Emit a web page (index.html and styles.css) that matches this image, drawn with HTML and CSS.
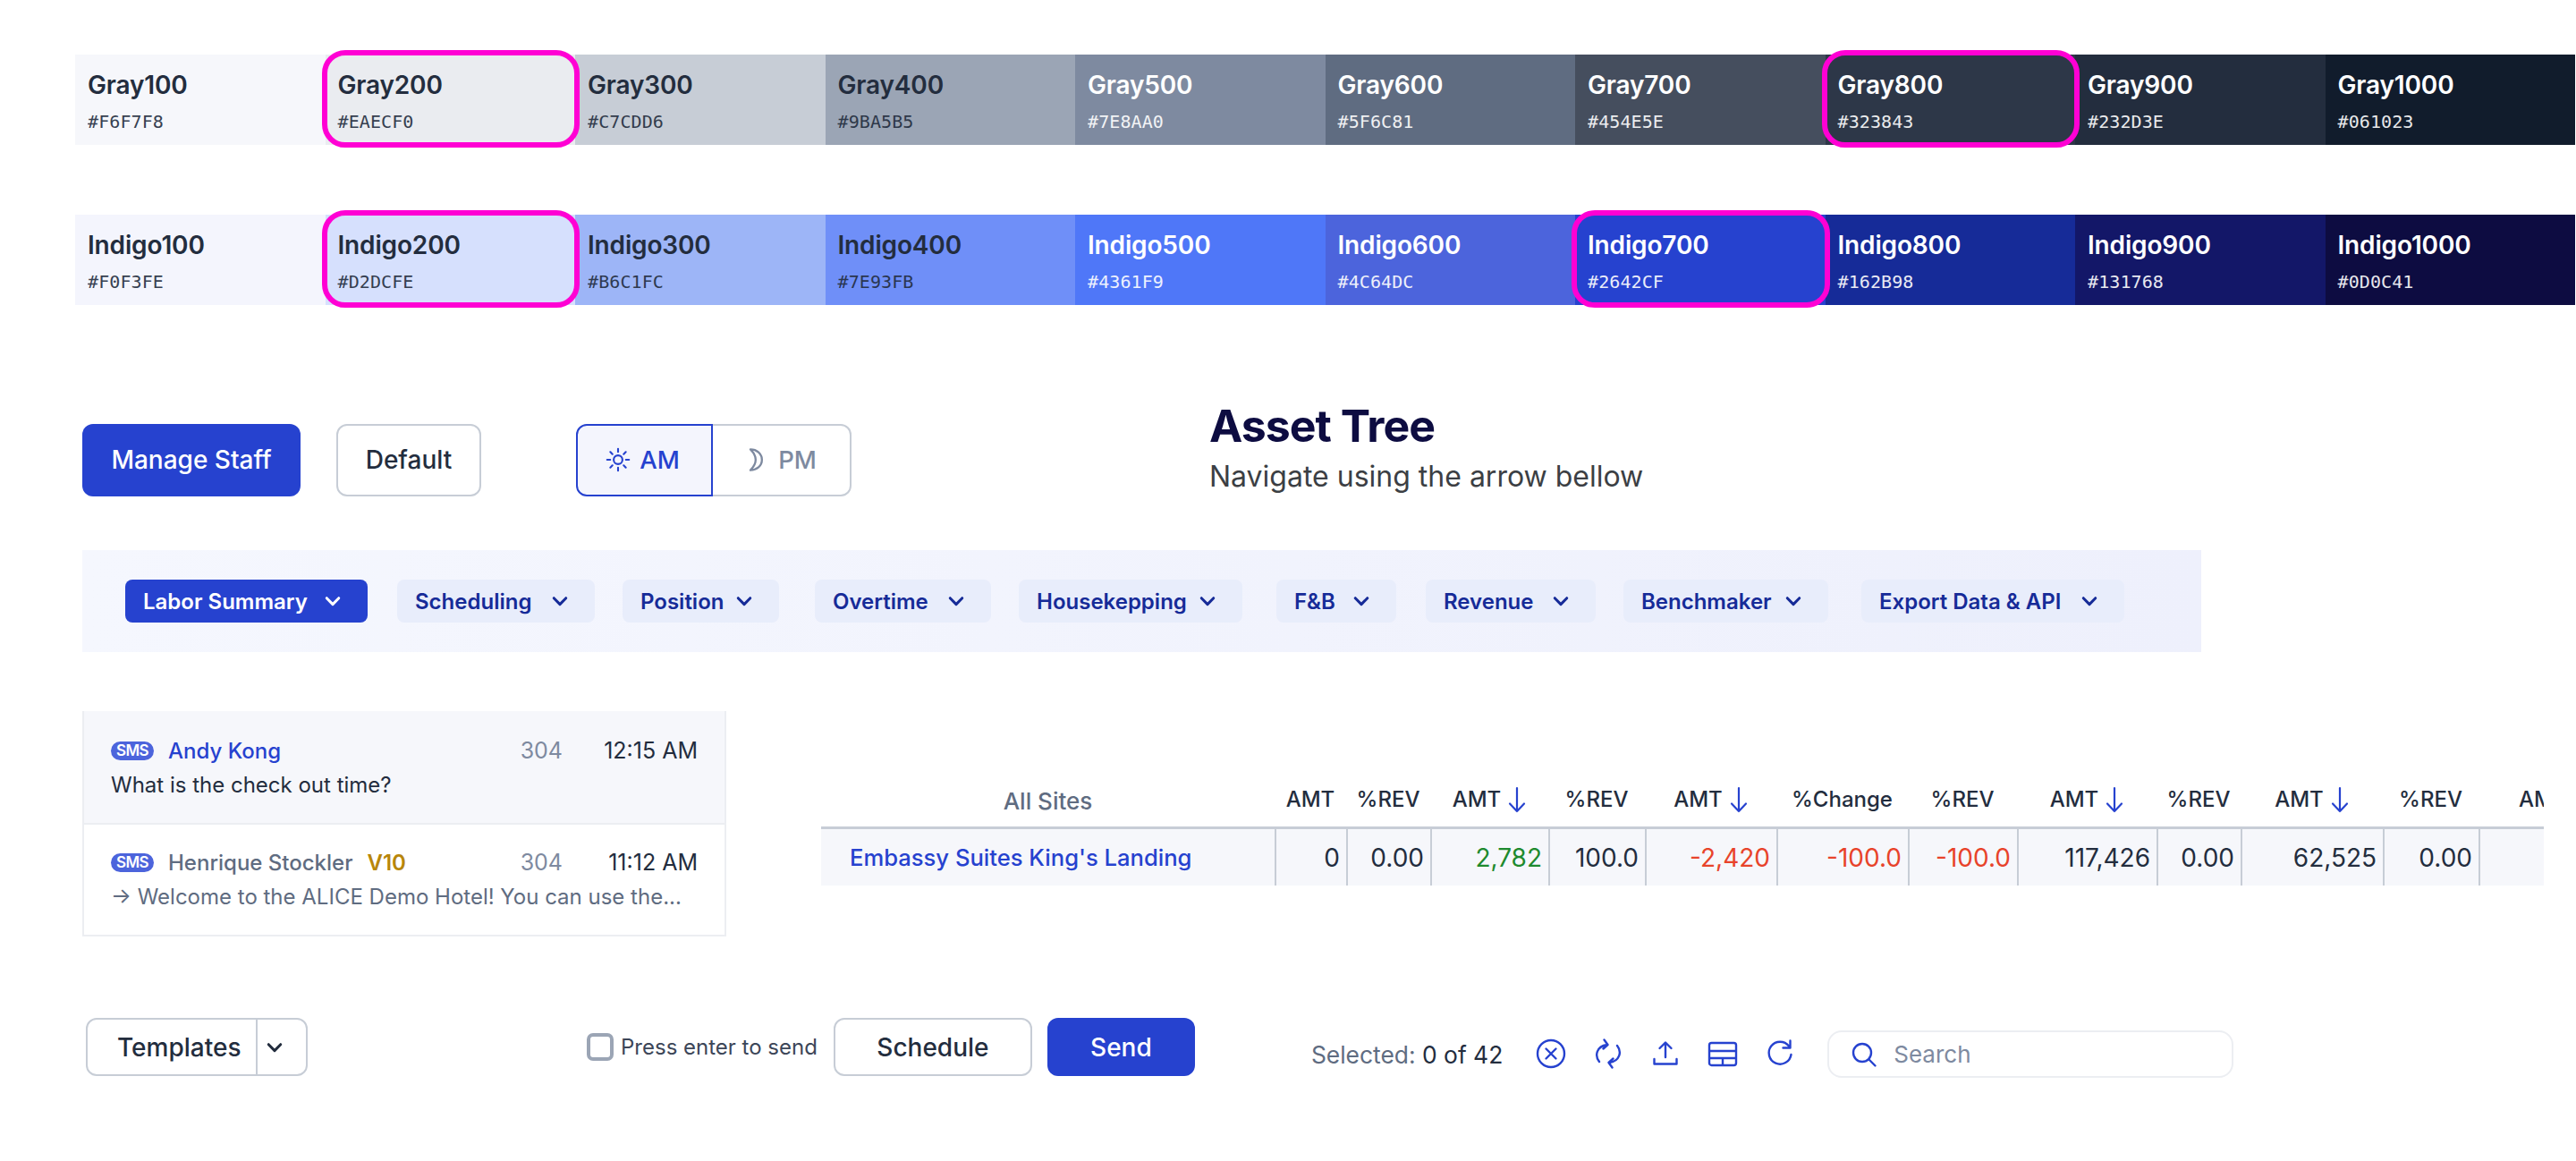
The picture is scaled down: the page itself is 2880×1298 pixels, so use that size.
FILE: index.html
```html
<!DOCTYPE html>
<html lang="en">
<head>
<meta charset="utf-8">
<title>Design system</title>
<link rel="stylesheet" href="styles.css">
</head>
<body>
<svg class="defs" width="0" height="0" aria-hidden="true">
  <symbol id="chev" viewBox="0 0 16 16"><path d="M3.500 5.800 8 10.400l4.500-4.600" fill="none" stroke="currentColor" stroke-width="2" stroke-linecap="round" stroke-linejoin="round"/></symbol>
  <symbol id="down" viewBox="0 0 20 30"><path d="M10 2v26M2 19.500l8 8.500 8-8.500" fill="none" stroke="currentColor" stroke-width="2.200" stroke-linecap="round" stroke-linejoin="round"/></symbol>
</svg>
<main class="page">
  <section class="palette">
    <div class="ramp">
      <div class="swatch g100"><b>Gray100</b><code>#F6F7F8</code></div>
      <div class="swatch g200 picked"><b>Gray200</b><code>#EAECF0</code></div>
      <div class="swatch g300"><b>Gray300</b><code>#C7CDD6</code></div>
      <div class="swatch g400"><b>Gray400</b><code>#9BA5B5</code></div>
      <div class="swatch g500 inv"><b>Gray500</b><code>#7E8AA0</code></div>
      <div class="swatch g600 inv"><b>Gray600</b><code>#5F6C81</code></div>
      <div class="swatch g700 inv"><b>Gray700</b><code>#454E5E</code></div>
      <div class="swatch g800 inv picked"><b>Gray800</b><code>#323843</code></div>
      <div class="swatch g900 inv"><b>Gray900</b><code>#232D3E</code></div>
      <div class="swatch g1000 inv"><b>Gray1000</b><code>#061023</code></div>
    </div>
    <div class="ramp">
      <div class="swatch i100"><b>Indigo100</b><code>#F0F3FE</code></div>
      <div class="swatch i200 picked"><b>Indigo200</b><code>#D2DCFE</code></div>
      <div class="swatch i300"><b>Indigo300</b><code>#B6C1FC</code></div>
      <div class="swatch i400"><b>Indigo400</b><code>#7E93FB</code></div>
      <div class="swatch i500 inv"><b>Indigo500</b><code>#4361F9</code></div>
      <div class="swatch i600 inv"><b>Indigo600</b><code>#4C64DC</code></div>
      <div class="swatch i700 inv picked"><b>Indigo700</b><code>#2642CF</code></div>
      <div class="swatch i800 inv"><b>Indigo800</b><code>#162B98</code></div>
      <div class="swatch i900 inv"><b>Indigo900</b><code>#131768</code></div>
      <div class="swatch i1000 inv"><b>Indigo1000</b><code>#0D0C41</code></div>
    </div>
  </section>

  <section class="toolbar">
    <div class="actions">
      <button class="btn primary manage">Manage Staff</button>
      <button class="btn outline default">Default</button>
      <div class="toggle">
        <span class="seg on">
          <svg class="ico22" viewBox="0 0 24 24" fill="none" stroke="currentColor" stroke-width="1.800" stroke-linecap="round"><circle cx="12" cy="12" r="4.200"/><path d="M12 1.500v3M12 19.500v3M1.500 12h3M19.500 12h3M4.600 4.600l2 2M17.400 17.400l2 2M4.600 19.400l2-2M17.400 6.600l2-2"/></svg>
          AM
        </span>
        <span class="seg off">
          <svg class="ico22" viewBox="0 0 24 24" fill="none" stroke="currentColor" stroke-width="2" stroke-linecap="round" stroke-linejoin="round"><path d="M6 2c6 0 11 4 11 10s-5 10-11 10c3-3 5-6 5-10S9 5 6 2Z"/></svg>
          PM
        </span>
      </div>
    </div>
    <div class="heading">
      <h1>Asset Tree</h1>
      <p>Navigate using the arrow bellow</p>
    </div>
  </section>

  <nav class="tabs">
    <a class="tab active w-labor">Labor Summary<svg class="chev"><use href="#chev"/></svg></a>
    <a class="tab w-sched">Scheduling<svg class="chev"><use href="#chev"/></svg></a>
    <a class="tab w-pos">Position<svg class="chev"><use href="#chev"/></svg></a>
    <a class="tab w-over">Overtime<svg class="chev"><use href="#chev"/></svg></a>
    <a class="tab w-house">Housekepping<svg class="chev"><use href="#chev"/></svg></a>
    <a class="tab w-fb">F&amp;B<svg class="chev"><use href="#chev"/></svg></a>
    <a class="tab w-rev">Revenue<svg class="chev"><use href="#chev"/></svg></a>
    <a class="tab w-bench">Benchmaker<svg class="chev"><use href="#chev"/></svg></a>
    <a class="tab w-exp">Export Data &amp; API<svg class="chev"><use href="#chev"/></svg></a>
  </nav>

  <section class="content">
    <div class="inbox">
      <article class="msg unread">
        <div class="msg-top">
          <span class="sms">SMS</span>
          <span class="name link">Andy Kong</span>
          <span class="room">304</span>
          <time class="time">12:15 AM</time>
        </div>
        <p class="msg-text">What is the check out time?</p>
      </article>
      <article class="msg">
        <div class="msg-top">
          <span class="sms">SMS</span>
          <span class="name">Henrique Stockler</span>
          <span class="vip">V10</span>
          <span class="room">304</span>
          <time class="time">11:12 AM</time>
        </div>
        <p class="msg-text muted"><span class="out">→</span> Welcome to the ALICE Demo Hotel! You can use the...</p>
      </article>
    </div>

    <div class="grid-wrap">
      <div class="grid head">
        <div class="h site">All Sites</div>
        <div class="h">AMT</div>
        <div class="h">%REV</div>
        <div class="h">AMT<svg class="down"><use href="#down"/></svg></div>
        <div class="h">%REV</div>
        <div class="h">AMT<svg class="down"><use href="#down"/></svg></div>
        <div class="h">%Change</div>
        <div class="h">%REV</div>
        <div class="h">AMT<svg class="down"><use href="#down"/></svg></div>
        <div class="h">%REV</div>
        <div class="h">AMT<svg class="down"><use href="#down"/></svg></div>
        <div class="h">%REV</div>
        <div class="h clip">AMT</div>
      </div>
      <div class="grid body">
        <div class="c site">Embassy Suites King's Landing</div>
        <div class="c">0</div>
        <div class="c">0.00</div>
        <div class="c pos">2,782</div>
        <div class="c">100.0</div>
        <div class="c neg">-2,420</div>
        <div class="c neg">-100.0</div>
        <div class="c neg">-100.0</div>
        <div class="c">117,426</div>
        <div class="c">0.00</div>
        <div class="c">62,525</div>
        <div class="c">0.00</div>
        <div class="c"></div>
      </div>
    </div>
  </section>

  <section class="footer-bar">
    <div class="split">
      <span class="split-main">Templates</span>
      <span class="split-arrow"><svg class="chev"><use href="#chev"/></svg></span>
    </div>
    <label class="enter"><span class="check"></span>Press enter to send</label>
    <button class="btn outline small schedule">Schedule</button>
    <button class="btn primary small send">Send</button>
    <div class="selected"><span class="muted-label">Selected:</span> 0 of 42</div>
    <div class="icons">
      <svg class="ico" viewBox="0 0 34 34" fill="none" stroke="currentColor" stroke-width="2.400" stroke-linecap="round"><circle cx="17" cy="17" r="15"/><path d="m11.500 11.500 11 11M22.500 11.500l-11 11"/></svg>
      <svg class="ico" viewBox="0 0 34 34" fill="none" stroke="currentColor" stroke-width="2.400" stroke-linecap="round" stroke-linejoin="round"><path d="M7 26C1.500 19 4 9 15.500 7M27 8c5.500 7 3 17-8.500 19M12.500 1.500 16.500 7l-5 4.500M21.500 32.500 17.500 27l5-4.500"/></svg>
      <svg class="ico" viewBox="0 0 34 34" fill="none" stroke="currentColor" stroke-width="2.400" stroke-linecap="round" stroke-linejoin="round"><path d="M17 21V5M10.500 11 17 4.500 23.500 11M4.500 23v5.500h25V23"/></svg>
      <svg class="ico" viewBox="0 0 34 34" fill="none" stroke="currentColor" stroke-width="2.400" stroke-linejoin="round"><rect x="2" y="5" width="30" height="25" rx="2.500"/><path d="M2 14h30M2 22h30M17 22v8"/></svg>
      <svg class="ico" viewBox="0 0 34 34" fill="none" stroke="currentColor" stroke-width="2.400" stroke-linecap="round" stroke-linejoin="round"><path d="M27 8.500A12.500 12.500 0 1 0 29.500 18M28.500 2.500v8h-8"/></svg>
    </div>
    <div class="search">
      <svg class="search-ico" viewBox="0 0 30 30" fill="none" stroke="currentColor" stroke-width="2.400" stroke-linecap="round"><circle cx="13" cy="13" r="10"/><path d="m20.500 20.500 7 7"/></svg>
      <span>Search</span>
    </div>
  </section>
</main>
</body>
</html>
```
FILE: styles.css
```css
* { box-sizing: border-box; }
html, body { margin: 0; padding: 0; background: #fff; }
body { font-family: Inter, "Liberation Sans", sans-serif; color: #232D3E; width: 2880px; height: 1298px; overflow: hidden; }
.defs { position: absolute; }
.page { padding-top: 61px; }

/* palette */
.palette { display: flex; flex-direction: column; gap: 78px; padding-left: 84px; }
.ramp { display: grid; grid-template-columns: repeat(10, 279.5px); height: 101px; }
.swatch { position: relative; padding: 17px 14px 0; color: #232D3E; }
.swatch b { display: block; font-size: 28px; line-height: 34px; font-weight: 600; letter-spacing: -0.15px; }
.swatch code { display: block; margin-top: 11px; font-family: "DejaVu Sans Mono", monospace; font-size: 20px; line-height: 26px; letter-spacing: 0.1px; opacity: 0.9; }
.swatch.inv { color: #fff; }
.picked { z-index: 1; }
.picked::after { content: ""; position: absolute; inset: -5px -5px -3px -4px; border: 6px solid #FF00D4; border-radius: 26px; }
.g100 { background: #F6F7FB; } .g200 { background: #EAECF0; } .g300 { background: #C7CDD6; } .g400 { background: #9BA5B5; }
.g500 { background: #7E8AA0; } .g600 { background: #5F6C81; } .g700 { background: #454E5E; } .g800 { background: #2D3748; }
.g900 { background: #232D3E; } .g1000 { background: #111C2C; }
.i100 { background: #F4F5FD; } .i200 { background: #D6E0FD; } .i300 { background: #9DB5F7; } .i400 { background: #6F8FF8; }
.i500 { background: #4F77F8; } .i600 { background: #4C64DC; } .i700 { background: #2642CF; } .i800 { background: #162B98; }
.i900 { background: #131768; } .i1000 { background: #0D0C41; }

/* toolbar */
.toolbar { display: flex; margin-top: 104px; height: 170px; padding-left: 92px; }
.actions { display: flex; align-items: flex-start; padding-top: 29px; width: 1260px; }
.btn { font-family: inherit; border-radius: 12px; cursor: pointer; padding: 0; }
.btn.primary { background: #2642CF; border: 0; color: #fff; }
.btn.outline { background: #fff; border: 2px solid #C7CDD6; color: #232D3E; }
.manage, .default { height: 81px; font-size: 28px; font-weight: 500; padding-bottom: 2px; }
.manage { width: 244px; }
.default { width: 162px; margin-left: 40px; }
.toggle { display: flex; height: 81px; margin-left: 106px; }
.seg { display: flex; align-items: center; justify-content: center; gap: 10px; font-size: 27.500px; font-weight: 500; padding-bottom: 2px; }
.seg.on { width: 153px; padding-right: 4px; background: #F4F5FD; color: #2642CF; border: 2px solid #2642CF; border-radius: 12px 0 0 12px; }
.seg.off { width: 155px; padding-right: 2px; color: #7E8AA0; border: 2px solid #C7CDD6; border-left: 0; border-radius: 0 12px 12px 0; }
.ico22 { width: 28px; height: 28px; }
.heading h1 { margin: 0; font-size: 50px; line-height: 62px; font-weight: 700; color: #0D0C41; letter-spacing: -1px; }
.heading p { margin: 4px 0 0; font-size: 32px; line-height: 44px; color: #3C3F44; }

/* tabs */
.tabs { display: flex; width: 2369px; height: 114px; margin-left: 92px; padding: 33px 48px; gap: 33px; background: linear-gradient(90deg, #F5F7FE, #EEF0FC); }
.tab { display: flex; align-items: center; justify-content: space-between; height: 48px; padding: 0 27px 0 20px; border-radius: 8px; background: #E8EDFB; color: #162B98; font-size: 24px; font-weight: 600; }
.tab.active { background: #2642CF; color: #fff; }
.chev { width: 24px; height: 24px; }
.w-labor { width: 271px; } .w-sched { width: 221px; } .w-pos { width: 175px; margin-left: -2px; } .w-over { width: 197px; margin-left: 7px; }
.w-house { width: 250px; margin-left: -2px; } .w-fb { width: 134px; margin-left: 5px; } .w-rev { width: 190px; } .w-bench { width: 229px; margin-left: -2px; } .w-exp { width: 294px; margin-left: 4px; }

/* content */
.content { display: flex; align-items: flex-start; gap: 106px; margin-top: 66px; margin-left: 92px; }
.inbox { width: 720px; border: 2px solid #ECEEF2; border-top: 0; }
.msg { height: 125px; padding: 26px 30px 0; }
.msg + .msg { border-top: 2px solid #ECEEF2; padding-top: 24px; }
.msg.unread { background: #F6F7FB; }
.msg-top { display: flex; align-items: center; height: 36px; font-size: 25px; }
.sms { display: flex; align-items: center; justify-content: center; width: 48px; height: 21px; border-radius: 11px; background: #4C64DC; color: #fff; font-size: 17px; font-weight: 600; letter-spacing: -0.6px; }
.name { margin-left: 16px; font-size: 24px; color: #5F6C81; font-weight: 500; }
.name.link { color: #2642CF; }
.vip { margin-left: 16px; font-size: 24px; color: #B8860B; font-weight: 600; }
.room { margin-left: auto; color: #7E8AA0; }
.time { width: 151px; text-align: right; color: #232D3E; }
.msg-text { margin: 3px 0 0; font-size: 24px; line-height: 36px; color: #232D3E; white-space: nowrap; }
.msg-text.muted { color: #5F6C81; }
.out { color: #5F6C81; }

.grid-wrap { width: 1926px; margin-top: 70px; overflow: hidden; }
.grid { display: grid; grid-template-columns: 507px 80px 94px 132px 108px 147px 147px 122px 156px 94px 159px 107px 73px; }
.head { height: 62px; border-bottom: 3px solid #C7CDD6; }
.h { display: flex; align-items: center; justify-content: center; gap: 8px; font-size: 24px; font-weight: 500; white-space: nowrap; color: #232D3E; padding-bottom: 2px; }
.h.site { color: #5F6C81; font-size: 26px; padding: 1px 0 0; }
.h.clip { justify-content: flex-start; padding-left: 45px; }
.down { width: 20px; height: 30px; color: #2642CF; }
.body { height: 63px; background: #F6F7FB; font-size: 28px; }
.c { display: flex; align-items: center; justify-content: flex-end; padding-right: 7px; border-left: 2px solid #C7CDD6; color: #232D3E; }
.c.site { justify-content: flex-start; padding-left: 32px; border-left: 0; color: #2642CF; font-size: 25.600px; font-weight: 500; }
.c.pos { color: #1E8A2E; }
.c.neg { color: #E8432A; }

/* footer */
.footer-bar { display: flex; align-items: flex-start; margin-top: 91px; padding-left: 96px; }
.split { display: flex; width: 248px; height: 65px; border: 2px solid #C7CDD6; border-radius: 12px; font-size: 28px; font-weight: 500; }
.split-main { display: flex; align-items: center; width: 190px; padding-left: 33px; border-right: 2px solid #C7CDD6; }
.split-arrow { display: flex; align-items: center; flex: 1; padding-left: 7px; }
.enter { display: flex; align-items: center; gap: 8px; height: 65px; margin-left: 312px; font-size: 24px; color: #3C4658; white-space: nowrap; }
.check { width: 30px; height: 31px; border: 4px solid #9BA5B5; border-radius: 7px; }
.btn.small { height: 65px; font-size: 28px; font-weight: 500; }
.schedule { width: 222px; margin-left: 18px; }
.send { width: 165px; margin-left: 17px; }
.selected { margin-left: 130px; margin-top: 24px; font-size: 26.400px; line-height: 34px; white-space: nowrap; }
.muted-label { color: #5F6C81; }
.icons { display: flex; align-items: center; gap: 30px; margin-left: 37px; margin-top: 23px; color: #2642CF; }
.ico { width: 34px; height: 34px; }
.search { display: flex; align-items: center; gap: 18px; width: 454px; height: 53px; margin-left: 36px; margin-top: 14px; padding-left: 24px; border: 2px solid #ECEEF2; border-radius: 16px; font-size: 26px; color: #7E8AA0; }
.search-ico { width: 30px; height: 30px; color: #2642CF; }
```
